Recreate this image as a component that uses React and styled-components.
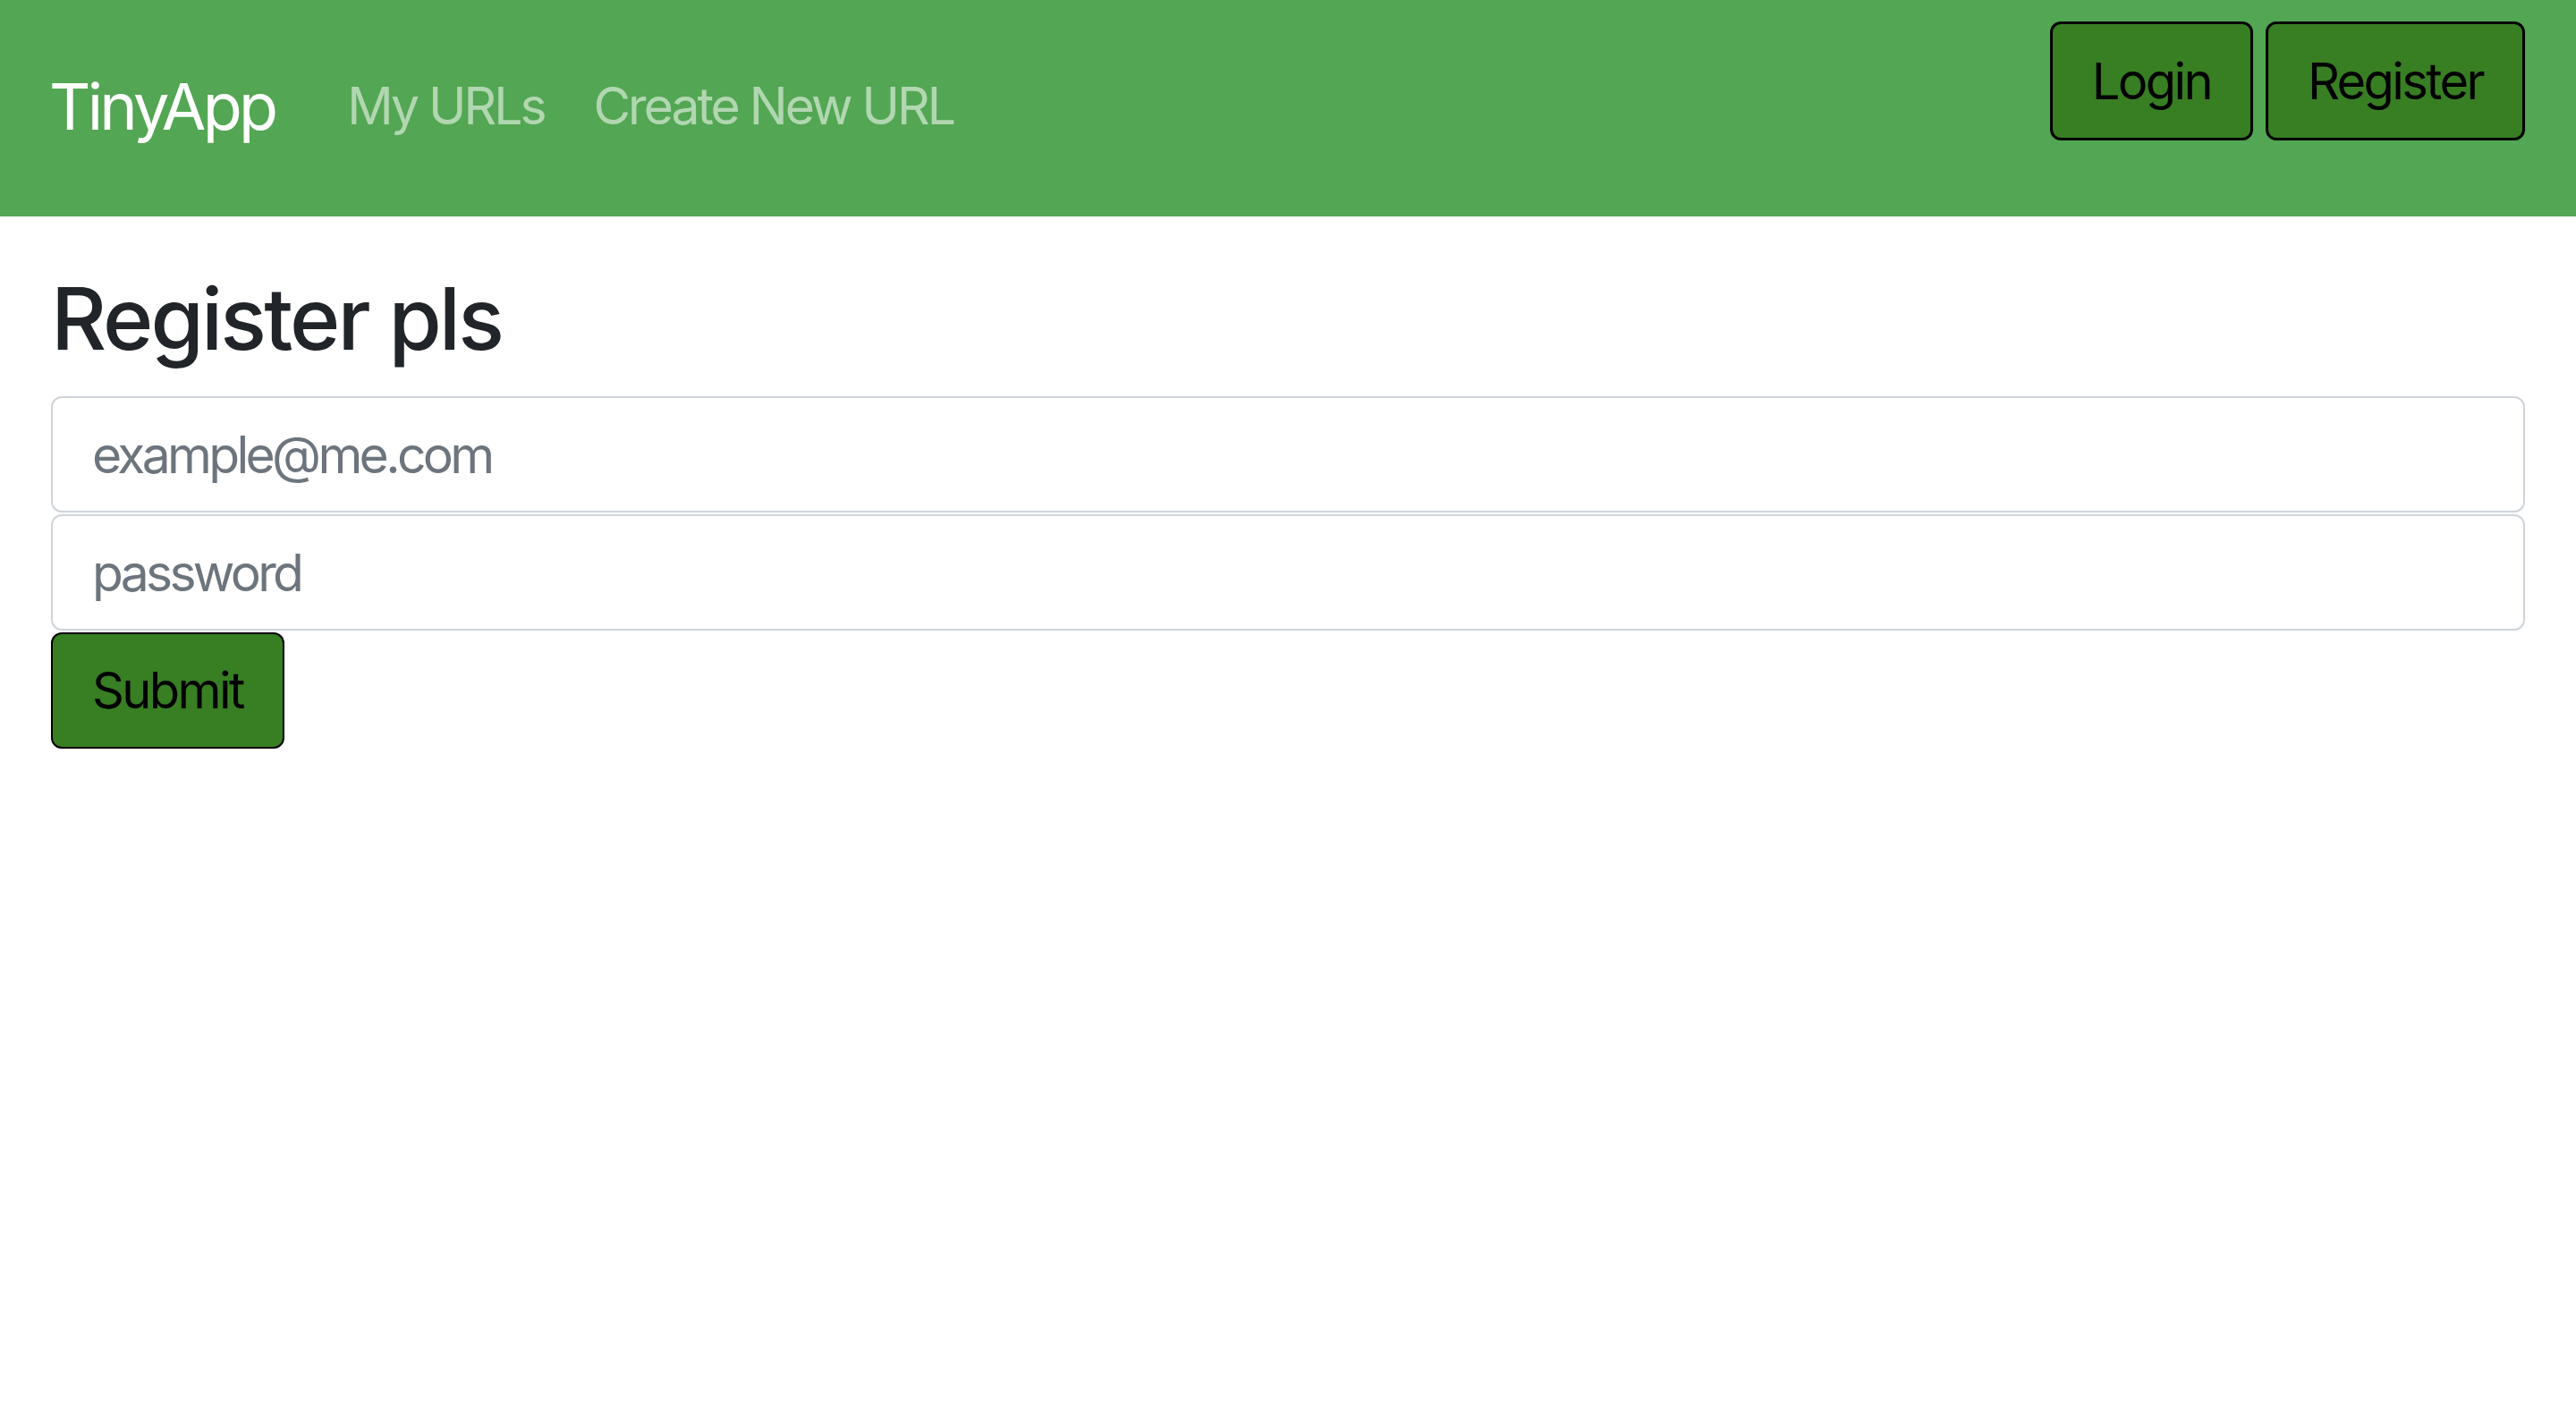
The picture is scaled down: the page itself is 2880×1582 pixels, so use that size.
import React from "react";
import styled, { createGlobalStyle } from "styled-components";

const GlobalStyle = createGlobalStyle`
  html, body {
    margin: 0;
    padding: 0;
    background: #ffffff;
    font-family: Inter, "Noto Sans", "Liberation Sans", sans-serif;
    color: #212529;
  }
  * { box-sizing: border-box; }
`;

const NavBar = styled.nav`
  height: 242px;
  background: #53a653;
  display: flex;
  justify-content: space-between;
  align-items: flex-start;
  padding: 0 57px;
`;

const NavLeft = styled.div`
  display: flex;
  align-items: center;
  align-self: center;
  margin-top: -6px;
`;

const Brand = styled.a`
  font-size: 72px;
  color: #ffffff;
  text-decoration: none;
  letter-spacing: -3.8px;
  margin-left: -2px;
  margin-right: 81px;
`;

const NavLink = styled.a`
  font-size: 57px;
  color: rgba(255, 255, 255, 0.55);
  text-decoration: none;
  letter-spacing: -3px;
  margin-right: 55px;
`;

const NavRight = styled.div`
  display: flex;
  gap: 14px;
  margin-top: 24px;
`;

const GreenButton = styled.button`
  height: ${(p) => p.$h || 133}px;
  padding: 0 44px;
  background: #387e23;
  color: #000000;
  border: ${(p) => p.$b || 3}px solid #000000;
  border-radius: 12px;
  font-family: inherit;
  font-size: 56px;
  letter-spacing: -2.6px;
  cursor: pointer;
`;

const Main = styled.main`
  padding: 0 57px;
`;

const Heading = styled.h1`
  margin: 57px 0 29px;
  font-size: 96px;
  font-weight: 500;
  line-height: 115px;
  letter-spacing: -2.9px;
  color: #212529;
`;

const Form = styled.form`
  display: flex;
  flex-direction: column;
  align-items: flex-start;
`;

const Input = styled.input`
  display: block;
  width: 100%;
  height: 130px;
  margin-bottom: 2px;
  padding: 0 44px;
  border: 2px solid #ced4da;
  border-radius: 12px;
  font-family: inherit;
  font-size: 57px;
  letter-spacing: -3.7px;
  color: #212529;
  background: #ffffff;
  outline: none;
  &::placeholder {
    color: #6c757d;
    letter-spacing: -3.7px;
  }
`;

export default function App() {
  return (
    <>
      <GlobalStyle />
      <NavBar>
        <NavLeft>
          <Brand href="#">TinyApp</Brand>
          <NavLink href="#">My URLs</NavLink>
          <NavLink href="#">Create New URL</NavLink>
        </NavLeft>
        <NavRight>
          <GreenButton>Login</GreenButton>
          <GreenButton>Register</GreenButton>
        </NavRight>
      </NavBar>
      <Main>
        <Heading>Register pls</Heading>
        <Form onSubmit={(e) => e.preventDefault()}>
          <Input type="email" placeholder="example@me.com" />
          <Input type="password" placeholder="password" />
          <GreenButton type="submit" $h={130} $b={2}>Submit</GreenButton>
        </Form>
      </Main>
    </>
  );
}
